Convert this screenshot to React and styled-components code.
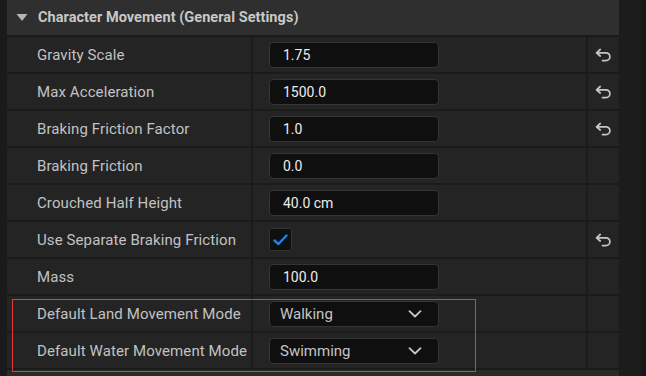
import React from "react";
import styled, { createGlobalStyle } from "styled-components";

const GlobalStyle = createGlobalStyle`
  html, body {
    margin: 0;
    padding: 0;
    background: #1a1a1a;
    overflow: hidden;
  }
  body {
    font-family: Roboto, "Noto Sans", "Liberation Sans", sans-serif;
  }
`;

const Page = styled.div`
  position: relative;
  display: flex;
  width: 646px;
  height: 376px;
  overflow: hidden;
  background: #1a1a1a;
`;

const LeftStrip = styled.div`
  width: 7px;
  flex-shrink: 0;
  background: #1a1a1a;
`;

const Panel = styled.div`
  width: 612px;
  flex-shrink: 0;
  display: flex;
  flex-direction: column;
  background: #1b1b1b;
`;

const RightStrip = styled.div`
  flex: 1;
  display: flex;
  background: #1c1c1c;
  border-right: 5px solid #171717;
`;

const Header = styled.div`
  height: 35px;
  flex-shrink: 0;
  display: flex;
  align-items: center;
  gap: 10px;
  padding-left: 9px;
  background: #2f2f2f;
  border-bottom: 2px solid #1b1b1b;
  color: #c8c8c8;
  font-size: 14.5px;
  font-weight: 700;
  letter-spacing: 0.05px;
`;

const Row = styled.div`
  height: 35px;
  flex-shrink: 0;
  display: flex;
  border-bottom: 2px solid #1b1b1b;
  background: #242424;
`;

const LabelCell = styled.div`
  width: 214px;
  padding-left: 30px;
  display: flex;
  align-items: center;
  border-right: 2px solid #1b1b1b;
  color: #c2c2c2;
  font-size: 15px;
  letter-spacing: 0.1px;
  white-space: nowrap;
`;

const ValueCell = styled.div`
  width: 317px;
  padding-left: 16px;
  display: flex;
  align-items: center;
  border-right: 2px solid #1b1b1b;
`;

const ResetCell = styled.div`
  flex: 1;
  display: flex;
  align-items: center;
  justify-content: center;
`;

const Box = styled.div`
  box-sizing: border-box;
  width: 170px;
  height: 26px;
  display: flex;
  align-items: center;
  justify-content: space-between;
  padding: 0 16px 0 ${(p) => (p.$dropdown ? 10 : 13)}px;
  background: #0f0f0f;
  border: 1px solid #353535;
  border-radius: 4px;
  color: ${(p) => (p.$dropdown ? "#c4c4c4" : "#ececec")};
  font-size: ${(p) => (p.$dropdown ? 15 : 14)}px;
`;

const Check = styled.div`
  box-sizing: border-box;
  width: 23px;
  height: 23px;
  display: flex;
  align-items: center;
  justify-content: center;
  background: #0f0f0f;
  border: 1px solid #333333;
  border-radius: 3px;
`;

const Footer = styled.div`
  flex: 1;
  background: #2a2a2a;
`;

const Highlight = styled.div`
  position: absolute;
  left: 12px;
  top: 299px;
  width: 464px;
  height: 73px;
  box-sizing: border-box;
  border: 1px solid #e23b3b;
  pointer-events: none;
`;

const Triangle = () => (
  <svg width="12" height="9" viewBox="0 0 12 9">
    <path d="M0.5 1 L11.5 1 L6 8 Z" fill="#b4b4b4" />
  </svg>
);

const ResetIcon = () => (
  <svg width="17" height="14" viewBox="0 0 17 14" fill="none">
    <path
      d="M5.2 1.5 L1.5 4.8 L5.2 8 M1.5 4.8 H11 A3.9 3.9 0 0 1 11 12.6 H7.5"
      stroke="#c6c6c6"
      strokeWidth="1.7"
      strokeLinecap="round"
      strokeLinejoin="round"
    />
  </svg>
);

const Chevron = () => (
  <svg width="14" height="8" viewBox="0 0 14 8" fill="none">
    <path d="M1.5 1.2 L7 6.5 L12.5 1.2" stroke="#c8c8c8" strokeWidth="1.8" strokeLinecap="round" strokeLinejoin="round" />
  </svg>
);

const CheckMark = () => (
  <svg width="15" height="12" viewBox="0 0 15 12" fill="none">
    <path d="M1.5 6.5 L5.5 10 L13.5 1.5" stroke="#1f82ec" strokeWidth="2.4" strokeLinecap="round" strokeLinejoin="round" />
  </svg>
);

const rows = [
  { label: "Gravity Scale", value: "1.75", reset: true },
  { label: "Max Acceleration", value: "1500.0", reset: true },
  { label: "Braking Friction Factor", value: "1.0", reset: true },
  { label: "Braking Friction", value: "0.0" },
  { label: "Crouched Half Height", value: "40.0 cm" },
  { label: "Use Separate Braking Friction", check: true, reset: true },
  { label: "Mass", value: "100.0" },
  { label: "Default Land Movement Mode", value: "Walking", dropdown: true },
  { label: "Default Water Movement Mode", value: "Swimming", dropdown: true },
];

export default function App() {
  return (
    <>
      <GlobalStyle />
      <Page>
        <LeftStrip />
        <Panel>
          <Header>
            <Triangle />
            Character Movement (General Settings)
          </Header>
          {rows.map((r) => (
            <Row key={r.label}>
              <LabelCell>{r.label}</LabelCell>
              <ValueCell>
                {r.check ? (
                  <Check>
                    <CheckMark />
                  </Check>
                ) : (
                  <Box $dropdown={r.dropdown}>
                    {r.value}
                    {r.dropdown && <Chevron />}
                  </Box>
                )}
              </ValueCell>
              <ResetCell>{r.reset && <ResetIcon />}</ResetCell>
            </Row>
          ))}
          <Footer />
        </Panel>
        <RightStrip />
        <Highlight />
      </Page>
    </>
  );
}
